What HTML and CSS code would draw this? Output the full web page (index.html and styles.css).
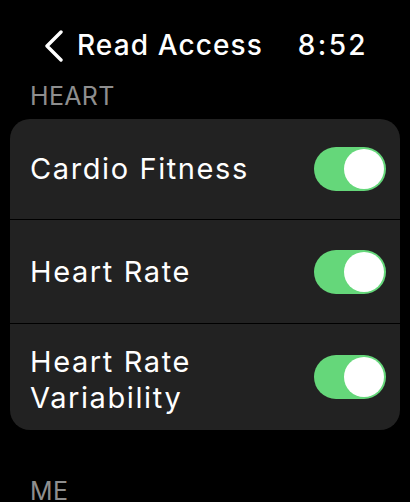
FILE: index.html
```html
<!DOCTYPE html>
<html lang="en">
<head>
  <meta charset="UTF-8">
  <meta name="viewport" content="width=device-width, initial-scale=1.0">
  <title>Read Access</title>
  <link rel="stylesheet" href="styles.css">
</head>
<body>
  <header class="nav">
    <div class="back">
      <svg class="chevron" width="20" height="32" viewBox="0 0 20 32">
        <polyline points="17,2 3,16 17,30" fill="none" stroke="#fff" stroke-width="3.4" stroke-linecap="round" stroke-linejoin="round"/>
      </svg>
      <span>Read Access</span>
    </div>
    <span class="clock">8:52</span>
  </header>

  <div class="section-label">HEART</div>
  <div class="group">
    <div class="row row-first">
      <span class="row-title">Cardio Fitness</span>
      <span class="toggle on"><span class="knob"></span></span>
    </div>
    <div class="row">
      <span class="row-title">Heart Rate</span>
      <span class="toggle on"><span class="knob"></span></span>
    </div>
    <div class="row row-tall">
      <span class="row-title">Heart Rate<br>Variability</span>
      <span class="toggle on"><span class="knob"></span></span>
    </div>
  </div>

  <div class="section-label section-gap">ME</div>
</body>
</html>
```

FILE: styles.css
```css
html, body {
  margin: 0;
  padding: 0;
  background: #000;
  color: #fff;
  font-family: Inter, "Noto Sans", sans-serif;
  overflow: hidden;
}
.nav {
  display: flex;
  justify-content: space-between;
  align-items: center;
  padding: 28px 44px 0 44px;
  font-size: 28px;
  line-height: 34px;
  font-weight: 500;
}
.back {
  display: flex;
  align-items: center;
  gap: 13px;
}
.back span { letter-spacing: 1.1px; }
.chevron { display: block; margin-top: 1px; }
.clock { letter-spacing: 2.4px; margin-right: -2px; }
.section-label {
  margin: 19px 0 0 30px;
  font-size: 25px;
  line-height: 30px;
  color: #8e8e8e;
  letter-spacing: 0.3px;
}
.section-gap { margin-top: 46px; }
.group {
  margin: 8px 10px 0 10px;
  background: #222222;
  border-radius: 20px;
  overflow: hidden;
}
.row {
  display: flex;
  align-items: center;
  justify-content: space-between;
  min-height: 104px;
  padding: 0 14px 0 20px;
  border-top: 1px solid #000;
  box-sizing: border-box;
}
.row-first { border-top: none; min-height: 100px; }
.row-tall { min-height: 107px; padding-top: 6px; }
.row-title {
  font-size: 29px;
  line-height: 36px;
  letter-spacing: 1.6px;
}
.row-tall .toggle { margin-top: -6px; }
.toggle {
  width: 72px;
  height: 44px;
  border-radius: 22px;
  background: #3a3a3c;
  display: flex;
  align-items: center;
  padding: 0 2px;
  box-sizing: border-box;
  flex-shrink: 0;
}
.toggle.on {
  background: #65d77a;
  justify-content: flex-end;
}
.knob {
  width: 40px;
  height: 40px;
  border-radius: 50%;
  background: #fff;
}
```
